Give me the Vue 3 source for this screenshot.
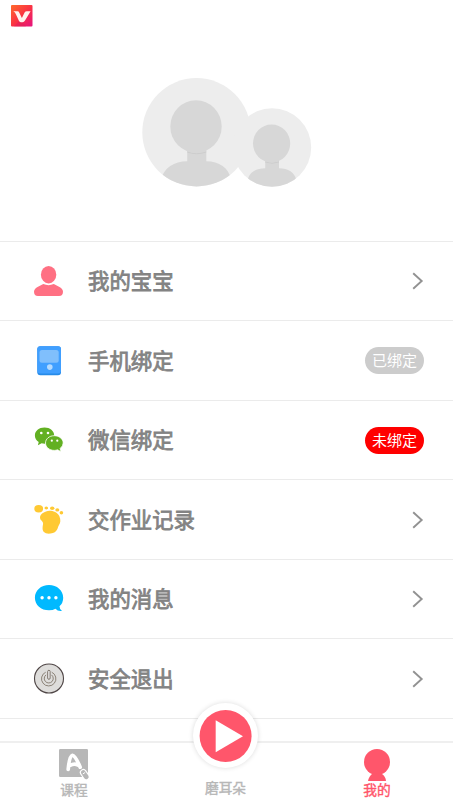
<script setup>
const rows = [
  { icon: 'baby', label: '我的宝宝' },
  { icon: 'phone', label: '手机绑定', badge: '已绑定' },
  { icon: 'wechat', label: '微信绑定', badge: '未绑定', alert: true },
  { icon: 'foot', label: '交作业记录' },
  { icon: 'message', label: '我的消息' },
  { icon: 'power', label: '安全退出' },
]
</script>

<template>
  <div class="screen">
    <header class="status">
      <svg class="logo" width="22" height="22" viewBox="0 0 22 22">
        <defs>
          <linearGradient id="logoFill" x1="0" y1="0" x2="1" y2="1">
            <stop offset="0" stop-color="#ff6a2b" />
            <stop offset=".5" stop-color="#fa3443" />
            <stop offset="1" stop-color="#e5127f" />
          </linearGradient>
        </defs>
        <rect width="21.5" height="21.5" rx="1" fill="url(#logoFill)" />
        <path d="M11 17 15 21.5H3L9 15Z" fill="#d91c5b" opacity=".4" />
        <path d="M2.300 6.300H6.600Q7.700 6.300 8.300 7.700L10.900 13 13.600 7.600Q14.300 6.300 15.800 6.300H19.600L14 15.600Q13.100 17.300 11.500 17.300H10.200Q8.700 17.300 7.900 15.700L5 9.400Q4.200 7.400 2.300 6.300Z" fill="#fff3ee" />
      </svg>
    </header>

    <section class="profile">
      <svg width="170" height="110" viewBox="0 0 170 110">
        <defs>
          <clipPath id="bigClip"><circle cx="54.5" cy="54.3" r="54.2" /></clipPath>
          <clipPath id="smallClip"><circle cx="130" cy="69.500" r="39.2" /></clipPath>
        </defs>
        <circle cx="54.5" cy="54.3" r="54.2" fill="#ededed" />
        <circle cx="130" cy="69.500" r="39.2" fill="#ededed" />
        <g clip-path="url(#bigClip)">
          <path d="M45.2 70H64.3V83.2C77 83.2 87 90 89 101V110H19V101C22 90 32 83.2 45.2 83.2Z" fill="#d7d7d7" />
          <path d="M45.2 74Q54.5 77.5 64.3 74" fill="none" stroke="#cdcdcd" />
        </g>
        <ellipse cx="54" cy="48.5" rx="25.7" ry="26.3" fill="#d7d7d7" />
        <g clip-path="url(#smallClip)">
          <path d="M123.2 81H137V90.3C146 90.3 153 94 154.5 103V110H105.500V103C107 94 114 90.3 123.2 90.3Z" fill="#d7d7d7" />
          <path d="M123.2 84Q130 86.500 137 84" fill="none" stroke="#cdcdcd" />
        </g>
        <ellipse cx="129.600" cy="65.500" rx="18.600" ry="19" fill="#d7d7d7" />
      </svg>
    </section>

    <main class="list">
      <div v-for="row in rows" :key="row.icon" class="row">
        <svg class="icon" width="32" height="32" viewBox="0 0 32 32">
          <g v-if="row.icon === 'baby'" fill="#ff7083">
            <ellipse cx="15.600" cy="9.700" rx="7.700" ry="8.700" />
            <path d="M10.300 19.100Q15.600 21.400 20.800 19.100L26.500 22Q30 23.900 30 26.800 30 31 26 31H5Q1 31 1 26.800 1 23.900 4.500 22Z" />
          </g>
          <g v-else-if="row.icon === 'phone'">
            <rect x="4.300" y="1.300" width="23.700" height="29" rx="3" fill="#278be8" />
            <rect x="4.300" y="1.300" width="23.700" height="27.300" rx="3" fill="#409fff" />
            <rect x="6.500" y="5" width="19.200" height="12.700" rx="2.500" fill="#80bffc" />
            <circle cx="16.800" cy="22.100" r="2.800" fill="#b5dbff" />
          </g>
          <g v-else-if="row.icon === 'wechat'">
            <path d="M11.500 3.500C6 3.500 1.900 7 1.900 11.500 1.900 14.200 3.300 16.400 5.700 17.900L4.900 21.300 8.600 19.300Q10 19.700 11.500 19.700C17 19.700 21.200 16 21.200 11.500S17 3.500 11.500 3.500Z" fill="#62b022" />
            <path d="M21.300 11.700C16.300 11.700 12.500 14.900 12.500 19S16.300 26.400 21.300 26.400Q23 26.400 24.500 25.800L28 27.700 27.200 24.400Q30.200 22 30.200 19C30.200 15 26.300 11.700 21.300 11.700Z" fill="#62b022" stroke="#fff" stroke-width=".8" />
            <g fill="#fff"><circle cx="8.300" cy="9" r="1.300" /><circle cx="15" cy="9" r="1.300" /><circle cx="18.800" cy="16.700" r="1.100" /><circle cx="24.300" cy="16.700" r="1.100" /></g>
          </g>
          <g v-else-if="row.icon === 'foot'" fill="#ffc933">
            <ellipse cx="5.700" cy="4.700" rx="4.400" ry="3.700" />
            <ellipse cx="13.300" cy="3.900" rx="1.800" ry="1.500" />
            <ellipse cx="19.200" cy="4.200" rx="2.200" ry="1.800" />
            <ellipse cx="24.300" cy="5.900" rx="2" ry="1.700" />
            <ellipse cx="28.400" cy="8.800" rx="1.800" ry="1.700" />
            <path d="M13 7.400C17.500 5.900 24 7.600 26.300 12.100 28 16.100 27.500 19.100 26 21.100 24.500 23.100 25 29.100 17.500 29.600 11.500 30.100 9.200 27.600 9.600 23.600 9.900 20.100 11 19.100 8.500 16.600 6 14.100 6.300 9.600 13 7.400Z" />
          </g>
          <g v-else-if="row.icon === 'message'">
            <path d="M16 2C8 2 1.900 7.500 1.900 14.700S8 27.300 16 27.300Q20 27.300 22.500 25.700 24.500 28.500 29 28 26.500 26 26.500 23.200 30.200 20 30.200 14.700C30.200 7.500 24 2 16 2Z" fill="#00b9ff" />
            <g fill="#fff"><circle cx="9.100" cy="14.800" r="1.700" /><circle cx="16" cy="14.800" r="1.700" /><circle cx="22.900" cy="14.800" r="1.700" /></g>
          </g>
          <g v-else fill="none">
            <circle cx="16" cy="15.500" r="14.500" fill="#dedddb" stroke="#4f4646" stroke-width="1.100" />
            <path d="M12.700 9.200A7.200 7.200 0 1 0 18.700 9.200M13 11.900A4.500 4.500 0 1 0 18.500 11.900" stroke="#81776b" stroke-width=".9" />
            <rect x="14.700" y="7.300" width="2.400" height="9" rx="1.200" fill="#eee" stroke="#6f655b" stroke-width=".9" />
          </g>
        </svg>
        <span class="label">{{ row.label }}</span>
        <span v-if="row.badge" class="badge" :class="{ alert: row.alert }">{{ row.badge }}</span>
        <svg v-else class="arrow" width="12" height="18" viewBox="0 0 12 18">
          <path d="M1.200 1.200 9.700 9 1.200 16.800" fill="none" stroke="#929292" stroke-width="1.900" />
        </svg>
      </div>
    </main>

    <nav class="tabs">
      <div class="tab course">
        <svg width="32" height="32" viewBox="0 0 32 32">
          <rect x="1" y="0" width="29" height="28" rx="1.200" fill="#b7b7b7" />
          <path d="M10.200 20.300Q11.400 7 14.500 6.300 17 5.800 22.200 18.200M12 16.500Q16 14.200 20 16" fill="none" stroke="#fff" stroke-width="3.700" stroke-linecap="round" stroke-linejoin="round" />
          <path d="M25.300 23.500 28.300 27.800" stroke="#fff" stroke-width="7" stroke-linecap="round" />
          <path d="M25.300 23.500 28.300 27.800" stroke="#b7b7b7" stroke-width="4.800" stroke-linecap="round" />
          <path d="M24.800 25 27.200 23.400" stroke="#fff" stroke-width="1" />
        </svg>
        <span>课程</span>
      </div>
      <div class="tab listen">
        <div class="play">
          <svg width="52" height="52" viewBox="0 0 52 52">
            <circle cx="25.600" cy="26" r="26" fill="#ff566b" />
            <path d="M15.700 10.300 43 26.300 15.700 42.200Z" fill="#fff" />
          </svg>
        </div>
        <span>磨耳朵</span>
      </div>
      <div class="tab mine">
        <svg width="32" height="32" viewBox="0 0 32 32">
          <circle cx="16" cy="13" r="13" fill="#ff566b" />
          <path d="M11.500 24.500H20.500Q24.500 27 25 32H7Q8 27 11.500 24.500Z" fill="#ff566b" />
        </svg>
        <span>我的</span>
      </div>
    </nav>
  </div>
</template>

<style>
body {
  background: #fff;
}
</style>

<style scoped>
.screen {
  display: flex;
  flex-direction: column;
  width: 453px;
  height: 806px;
  overflow: hidden;
  background: #fff;
  font-family: "Noto Sans CJK SC", sans-serif;
}
.status {
  height: 32px;
  padding: 5px 11px 0;
  box-sizing: border-box;
}
.logo {
  display: block;
}
.profile {
  height: 209px;
  padding: 46px 0 0 142px;
  box-sizing: border-box;
}
.profile svg {
  display: block;
  overflow: visible;
}
.list {
  height: 500px;
  flex: none;
}
.row {
  display: flex;
  align-items: center;
  height: 79.480px;
  padding: 0 29px 0 33px;
  box-sizing: border-box;
  border-top: 1px solid #ebebeb;
}
.row:last-child {
  height: 80.600px;
  border-bottom: 1px solid #ebebeb;
}
.icon {
  flex: none;
}
.label {
  margin-left: 23px;
  padding-bottom: 1.500px;
  font-size: 21.400px;
  line-height: 30px;
  font-weight: 400;
  -webkit-text-stroke: .8px #838383;
  color: #838383;
}
.arrow {
  margin-left: auto;
}
.badge {
  width: 59px;
  height: 27px;
  margin-left: auto;
  border-radius: 14px;
  background: #ccc;
  color: #fff;
  font-size: 15px;
  line-height: 25px;
  text-align: center;
}
.badge.alert {
  background: #f00;
}
.tabs {
  display: flex;
  justify-content: space-between;
  height: 65px;
  padding: 0 60px 0 58px;
  box-sizing: border-box;
  border-top: 2px solid #efefef;
}
.tab {
  display: flex;
  flex-direction: column;
  align-items: center;
  width: 32px;
  color: #b7b7b7;
  font-size: 13.700px;
  font-weight: 400;
  -webkit-text-stroke: .4px currentColor;
  line-height: 16px;
  white-space: nowrap;
}
.tab > svg {
  display: block;
  flex: none;
  margin-top: 6px;
}
.listen {
  width: 66px;
}
.mine {
  color: #ff566b;
}
.play {
  display: flex;
  align-items: center;
  justify-content: center;
  flex: none;
  width: 65px;
  height: 65px;
  margin-top: -40px;
  margin-bottom: 11px;
  border-radius: 50%;
  background: #fff;
  box-shadow: 0 0 5px rgba(0, 0, 0, .14);
}
.play svg {
  overflow: visible;
}
</style>
